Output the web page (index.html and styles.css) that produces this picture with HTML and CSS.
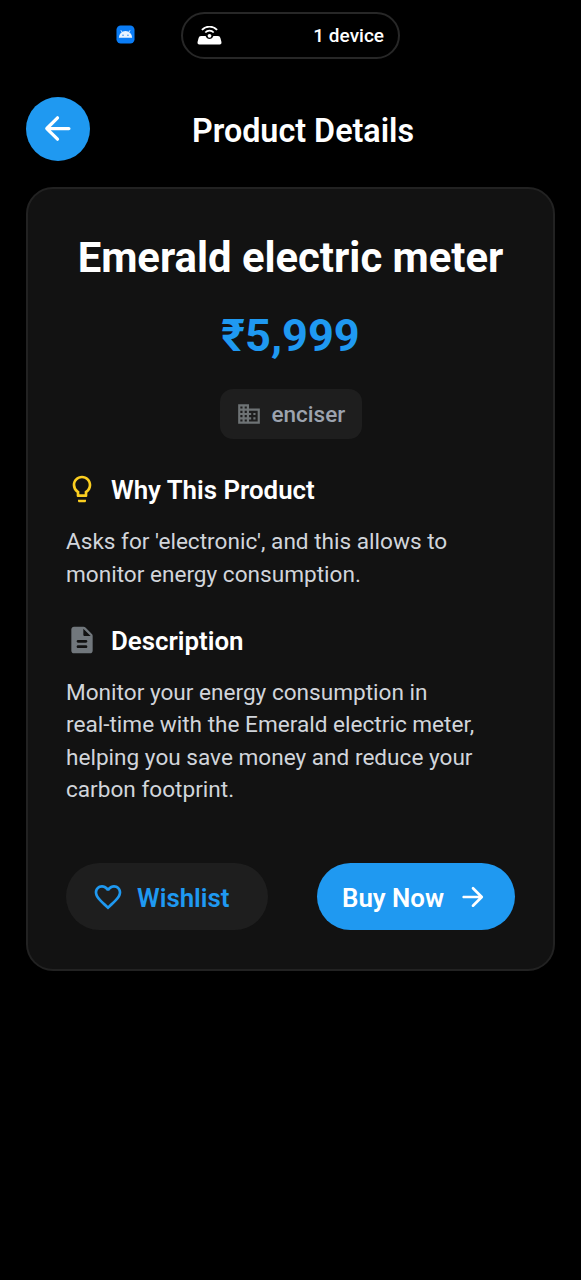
FILE: index.html
```html
<!DOCTYPE html>
<html lang="en">
<head>
<meta charset="utf-8">
<title>Product Details</title>
<link rel="stylesheet" href="styles.css">
</head>
<body>
<div class="status-bar">
  <svg class="android" viewBox="0 0 20 20"><rect x=".5" y=".5" width="19" height="19" rx="4.5" fill="#0a7cf5"/><path d="M3 13.400a7 7 0 0 1 14 0z" fill="#e8f3ff"/><path d="M5.200 5.600l1.800 2.800M14.800 5.600l-1.800 2.800" stroke="#e8f3ff" stroke-width="1"/><circle cx="7.400" cy="10.800" r=".7" fill="#0a7cf5"/><circle cx="12.600" cy="10.800" r=".7" fill="#0a7cf5"/></svg>
  <div class="device-pill">
    <svg class="router" viewBox="0 0 25 20"><path d="M1.600 12Q2 10 4 10h4.600q1.200 3 3.900 3t3.900-3H21q2 0 2.400 2l1 3.800q.5 2.700-1.700 2.700H2.300Q.1 18.500.6 15.800z" fill="#fff"/><circle cx="12.500" cy="9.800" r="1.900" fill="#fff"/><path d="M8.300 6.500a5.800 5.800 0 0 1 8.400 0M4.900 3.900a10.500 10.500 0 0 1 15.200 0" fill="none" stroke="#fff" stroke-width="1.800"/></svg>
    <span>1 device</span>
  </div>
</div>
<header class="app-bar">
  <button class="back" aria-label="Back"><svg viewBox="0 0 24 24"><path d="M19 11H7.830l4.880-4.880c.39-.39.39-1.030 0-1.420a.996.996 0 0 0-1.410 0l-6.590 6.590a.996.996 0 0 0 0 1.410l6.590 6.590a.996.996 0 1 0 1.410-1.410L7.830 13H19c.55 0 1-.45 1-1s-.45-1-1-1z"/></svg></button>
  <h1>Product Details</h1>
</header>
<main class="card">
  <h2 class="name">Emerald electric meter</h2>
  <p class="price">₹5,999</p>
  <div class="brand">
    <svg viewBox="0 0 24 24"><path d="M12 7V3H2v18h20V7H12zM6 19H4v-2h2v2zm0-4H4v-2h2v2zm0-4H4V9h2v2zm0-4H4V5h2v2zm4 12H8v-2h2v2zm0-4H8v-2h2v2zm0-4H8V9h2v2zm0-4H8V5h2v2zm10 12h-8v-2h2v-2h-2v-2h2v-2h-2V9h8v10zm-2-8h-2v2h2v-2zm0 4h-2v2h2v-2z"/></svg>
    <span>enciser</span>
  </div>
  <section>
    <h3><svg class="bulb" viewBox="0 0 24 24"><path d="M9 21c0 .55.45 1 1 1h4c.55 0 1-.45 1-1v-1H9v1zm3-19C8.140 2 5 5.140 5 9c0 2.380 1.190 4.470 3 5.740V17c0 .55.45 1 1 1h6c.55 0 1-.45 1-1v-2.260c1.810-1.270 3-3.360 3-5.740 0-3.860-3.140-7-7-7zm2.850 11.100l-.85.6V16h-4v-2.300l-.85-.6A4.997 4.997 0 0 1 7 9c0-2.760 2.240-5 5-5s5 2.240 5 5c0 1.630-.8 3.160-2.150 4.100z"/></svg><span>Why This Product</span></h3>
    <p>Asks for 'electronic', and this allows to<br>monitor energy consumption.</p>
  </section>
  <section>
    <h3><svg class="doc" viewBox="0 0 24 24"><path d="M14.590 2.590c-.38-.38-.89-.59-1.420-.59H6c-1.100 0-2 .9-2 2v16c0 1.100.89 2 1.990 2H18c1.100 0 2-.9 2-2V8.830c0-.53-.21-1.040-.59-1.410l-4.820-4.830zM15 18H9c-.55 0-1-.45-1-1s.45-1 1-1h6c.55 0 1 .45 1 1s-.45 1-1 1zm0-4H9c-.55 0-1-.45-1-1s.45-1 1-1h6c.55 0 1 .45 1 1s-.45 1-1 1zm-2-6V3.500L18.500 9H14c-.55 0-1-.45-1-1z"/></svg><span>Description</span></h3>
    <p>Monitor your energy consumption in<br>real-time with the Emerald electric meter,<br>helping you save money and reduce your<br>carbon footprint.</p>
  </section>
  <div class="actions">
    <button class="wish"><svg viewBox="0 0 24 24"><path d="M16.500 3c-1.740 0-3.410.81-4.500 2.090C10.910 3.810 9.240 3 7.500 3 4.420 3 2 5.420 2 8.500c0 3.780 3.400 6.860 8.550 11.540L12 21.350l1.450-1.320C18.600 15.360 22 12.280 22 8.500 22 5.420 19.580 3 16.500 3zm-4.400 15.550l-.1.100-.1-.1C7.140 14.240 4 11.390 4 8.500 4 6.500 5.500 5 7.500 5c1.540 0 3.040.99 3.570 2.360h1.870C13.460 5.990 14.960 5 16.500 5c2 0 3.500 1.500 3.500 3.500 0 2.890-3.140 5.740-7.900 10.050z"/></svg><span>Wishlist</span></button>
    <button class="buy"><span>Buy Now</span><svg viewBox="0 0 24 24"><path d="M5 13h11.170l-4.880 4.880c-.39.39-.39 1.030 0 1.420.39.39 1.020.39 1.410 0l6.590-6.590a.996.996 0 0 0 0-1.410l-6.580-6.600a.996.996 0 1 0-1.410 1.410L16.170 11H5c-.55 0-1 .45-1 1s.45 1 1 1z"/></svg></button>
  </div>
</main>
</body>
</html>
```
FILE: styles.css
```css
* { box-sizing: border-box; margin: 0; padding: 0; }
body { background: #000; color: #fff; font-family: Roboto, "Noto Sans", sans-serif; min-height: 1280px; padding: 12px 26px 0; }
svg { display: block; flex: none; fill: currentColor; }
button { border: 0; font: inherit; color: inherit; display: flex; align-items: center; }
.status-bar { display: flex; align-items: center; height: 47px; padding-left: 90px; }
.android { width: 19px; height: 19px; margin-bottom: 2px; }
.device-pill { margin-left: 46px; width: 219px; height: 47px; border: 2px solid #272727; border-radius: 24px; display: flex; align-items: center; justify-content: space-between; padding: 0 14px; font-size: 19px; font-weight: 500; }
.router { width: 25px; height: 20px; }
.app-bar { display: flex; align-items: center; margin-top: 38px; height: 64px; }
.back { width: 64px; height: 64px; border-radius: 50%; background: #1f99f1; justify-content: center; padding: 0 1px 1px 0; }
.back svg { width: 39px; height: 39px; }
h1 { margin-left: 102px; padding-top: 4px; font-size: 32.300px; line-height: 38px; font-weight: 600; white-space: nowrap; }
.card { margin-top: 26px; height: 784px; padding: 44px 38px 0; background: #121212; border: 2px solid #222; border-radius: 27px; display: flex; flex-direction: column; }
.name { text-align: center; font-size: 41.800px; line-height: 50px; font-weight: 700; white-space: nowrap; }
.price { text-align: center; margin-top: 26px; color: #1f99f1; font-size: 45.200px; line-height: 54px; font-weight: 700; }
.brand { align-self: center; margin-top: 26px; width: 142px; height: 50px; border-radius: 13px; background: #1e1e1e; display: flex; align-items: center; gap: 10px; padding: 0 0 0 16px; color: #9ca3af; font-size: 22.500px; font-weight: 500; }
.brand svg { width: 26px; height: 26px; color: #6e7375; }
section { margin-top: 34px; }
h3 { display: flex; align-items: center; gap: 13px; height: 34px; font-size: 25.850px; font-weight: 600; white-space: nowrap; }
h3 svg { width: 32px; height: 32px; margin-bottom: 2px; }
.bulb { color: #fbce20; }
.doc { color: #71777c; }
section p { margin-top: 19.400px; font-size: 22.600px; line-height: 32.280px; color: #d1d5db; white-space: nowrap; }
section + section { margin-top: 32.600px; }
.actions { display: flex; justify-content: space-between; margin-top: 57px; }
.actions button { height: 67px; border-radius: 34px; padding-top: 2px; font-size: 25.850px; font-weight: 600; white-space: nowrap; }
.actions svg { width: 32px; height: 32px; margin-bottom: 2px; }
.wish { width: 202px; background: #1e1e1e; color: #1f99f1; padding-left: 26px; gap: 13px; }
.buy { width: 198px; background: #1f99f1; color: #fff; padding-left: 25px; gap: 13px; }
```
